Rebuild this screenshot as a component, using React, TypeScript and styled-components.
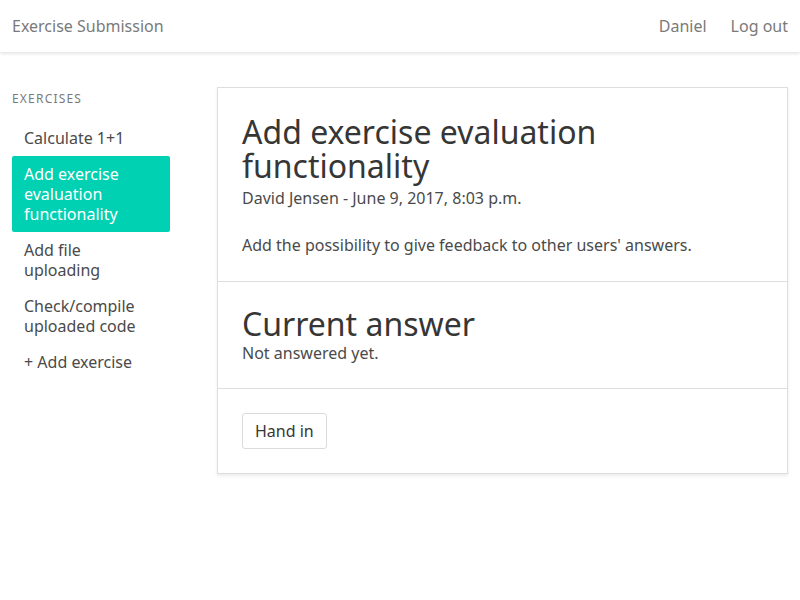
import React from "react";
import styled, { createGlobalStyle } from "styled-components";

const GlobalStyle = createGlobalStyle`
  html, body {
    margin: 0;
    padding: 0;
    background: #fff;
    font-family: "Noto Sans", "Open Sans", sans-serif;
    font-size: 16px;
    color: #4a4a4a;
  }
  * { box-sizing: border-box; }
`;

const Nav = styled.nav`
  height: 52px;
  display: flex;
  align-items: center;
  justify-content: space-between;
  padding: 0 12px;
  box-shadow: 0 2px 3px rgba(10, 10, 10, 0.1);
  position: relative;
`;

const NavItem = styled.a`
  color: #7a7a7a;
  font-size: 16px;
  text-decoration: none;
  cursor: pointer;
`;

const NavRight = styled.div`
  display: flex;
  gap: 24px;
`;

const Layout = styled.div`
  display: grid;
  grid-template-columns: 158px 1fr;
  gap: 47px;
  padding: 35px 12px 24px;
  align-items: start;
`;

const Menu = styled.aside`
  display: flex;
  flex-direction: column;
`;

const MenuLabel = styled.p`
  margin: 3px 0 12px;
  font-size: 12px;
  line-height: 18px;
  letter-spacing: 0.1em;
  text-transform: uppercase;
  color: #7a7a7a;
`;

const MenuList = styled.ul`
  list-style: none;
  margin: 0;
  padding: 0;
`;

const MenuLink = styled.a<{ $active?: boolean }>`
  display: block;
  padding: 8px 12px;
  line-height: 20px;
  border-radius: 2px;
  color: ${(p) => (p.$active ? "#fff" : "#4a4a4a")};
  background: ${(p) => (p.$active ? "#00d1b2" : "transparent")};
  cursor: pointer;
`;

const Card = styled.section`
  background: #fff;
  border: 1px solid #dedede;
  box-shadow: 0 2px 3px rgba(10, 10, 10, 0.08);
  display: flex;
  flex-direction: column;
`;

const CardSection = styled.div<{ $bottom?: number }>`
  padding: 24px 24px ${(p) => p.$bottom ?? 24}px;
  & + & {
    border-top: 1px solid #dedede;
  }
`;

const Title = styled.h1<{ $top?: number }>`
  margin: ${(p) => p.$top ?? 3}px 0 0;
  font-size: 32px;
  line-height: 34px;
  font-weight: 400;
  color: #363636;
`;

const Meta = styled.p<{ $top?: number }>`
  margin: ${(p) => p.$top ?? 0}px 0 0;
  line-height: 24px;
`;

const Description = styled.p`
  margin: 23px 0 0;
  line-height: 24px;
`;

const Button = styled.button`
  height: 36px;
  padding: 0 12px;
  font-family: inherit;
  font-size: 16px;
  color: #363636;
  background: #fff;
  border: 1px solid #dbdbdb;
  border-radius: 3px;
  cursor: pointer;
`;

const exercises = [
  "Calculate 1+1",
  "Add exercise evaluation functionality",
  "Add file uploading",
  "Check/compile uploaded code",
];

export default function App() {
  return (
    <>
      <GlobalStyle />
      <Nav>
        <NavItem>Exercise Submission</NavItem>
        <NavRight>
          <NavItem>Daniel</NavItem>
          <NavItem>Log out</NavItem>
        </NavRight>
      </Nav>
      <Layout>
        <Menu>
          <MenuLabel>Exercises</MenuLabel>
          <MenuList>
            {exercises.map((name, i) => (
              <li key={name}>
                <MenuLink $active={i === 1}>{name}</MenuLink>
              </li>
            ))}
            <li>
              <MenuLink>+ Add exercise</MenuLink>
            </li>
          </MenuList>
        </Menu>
        <Card>
          <CardSection>
            <Title>Add exercise evaluation functionality</Title>
            <Meta $top={3}>David Jensen - June 9, 2017, 8:03 p.m.</Meta>
            <Description>
              Add the possibility to give feedback to other users' answers.
            </Description>
          </CardSection>
          <CardSection $bottom={23}>
            <Title as="h2" $top={1}>Current answer</Title>
            <Meta>Not answered yet.</Meta>
          </CardSection>
          <CardSection>
            <Button>Hand in</Button>
          </CardSection>
        </Card>
      </Layout>
    </>
  );
}
